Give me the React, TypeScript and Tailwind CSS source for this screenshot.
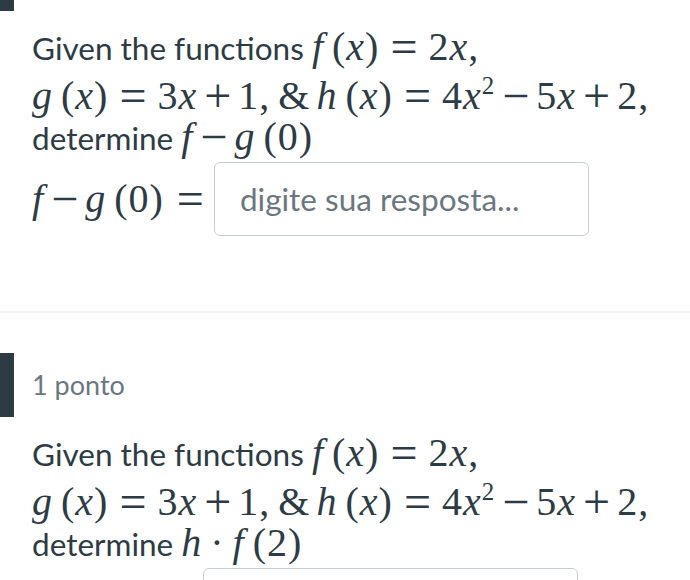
import React from "react";

const mathCls = "font-['Liberation_Serif',serif] text-[40px] tracking-[1px] text-[#2d3b45]";

function V({ c }: { c: string }) {
  return <span className="italic">{c}</span>;
}
function Rel({ c }: { c: string }) {
  return <span className="mx-[11px] align-[-3px] text-[48px] leading-[0] tracking-normal">{c}</span>;
}
function Bin({ c }: { c: string }) {
  return <span className="mx-[7px] align-[-3px] text-[48px] leading-[0] tracking-normal">{c}</span>;
}
function Dot() {
  return <span className="mx-[8px]">·</span>;
}
function Fn({ name, arg }: { name: string; arg: React.ReactNode }) {
  return (
    <span>
      <V c={name} />
      <span className="ml-[8px]">(</span>
      {arg}
      <span>)</span>
    </span>
  );
}

function Line1() {
  return (
    <div className="mt-[15px] h-[41px] leading-[41px] whitespace-nowrap">
      Given the functions{" "}
      <span className={mathCls}>
        <Fn name="f" arg={<V c="x" />} />
        <Rel c="=" />2<V c="x" />,
      </span>
    </div>
  );
}

function Line2() {
  return (
    <div className="mt-[8px] h-[41px] leading-[41px] whitespace-nowrap">
      <span className={mathCls}>
        <Fn name="g" arg={<V c="x" />} />
        <Rel c="=" />3<V c="x" />
        <Bin c="+" />1,
        <span className="ml-[8px]">&amp;</span>
        <span className="ml-[6px]">
          <Fn name="h" arg={<V c="x" />} />
        </span>
        <Rel c="=" />4<V c="x" />
        <span className="align-[15px] text-[25px] leading-[0]">2</span>
        <Bin c="−" />5<V c="x" />
        <Bin c="+" />2,
      </span>
    </div>
  );
}

function AnswerBox() {
  return (
    <input
      type="text"
      placeholder="digite sua resposta..."
      className="ml-[10px] w-[375px] h-[74px] rounded-[6px] border-[1.5px] border-[#c7cdd1] bg-white px-[25px] font-['Lato',sans-serif] text-[31.5px] text-[#2d3b45] placeholder:text-[#6b7780] outline-none"
    />
  );
}

function Question({ expr }: { expr: React.ReactNode }) {
  return (
    <section className="pb-[75px]">
      <div className="flex h-[64px] items-center gap-[18px]">
        <div className="h-full w-[14px] bg-[#2d3b45]" />
        <span className="text-[27px] text-[#6b7780]">1 ponto</span>
      </div>
      <div className="pl-[32px]">
        <Line1 />
        <Line2 />
        <div className="h-[41px] leading-[41px] whitespace-nowrap">
          determine <span className={mathCls}>{expr}</span>
        </div>
        <div className="mt-[5px] flex items-center">
          <span className={mathCls + " whitespace-nowrap leading-none"}>
            {expr}
            <span className="ml-[13px] align-[-3px] text-[48px] leading-[0] tracking-normal">=</span>
          </span>
          <AnswerBox />
        </div>
      </div>
    </section>
  );
}

export default function App() {
  const q1 = (
    <>
      <V c="f" />
      <Bin c="−" />
      <Fn name="g" arg={<span>0</span>} />
    </>
  );
  const q2 = (
    <>
      <V c="h" />
      <Dot />
      <Fn name="f" arg={<span>2</span>} />
    </>
  );
  return (
    <div className="h-[580px] w-[690px] overflow-hidden bg-white font-['Lato',sans-serif] text-[31.5px] text-[#2d3b45]">
      <div className="-mt-[53px] flex flex-col">
        <Question expr={q1} />
        <div className="h-[2px] bg-[#f2f2f2]" />
        <div className="mt-[40px]">
          <Question expr={q2} />
        </div>
      </div>
    </div>
  );
}
